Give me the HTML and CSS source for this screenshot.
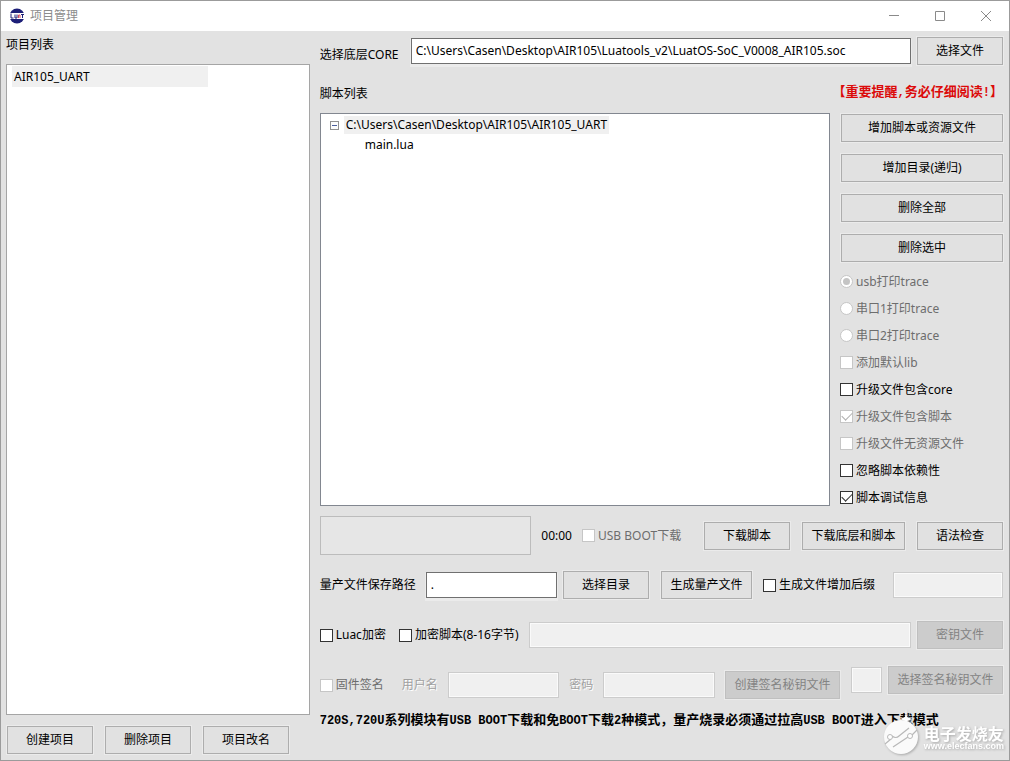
FILE: index.html
```html
<!DOCTYPE html>
<html lang="zh-CN">
<head>
<meta charset="utf-8">
<title>项目管理</title>
<link rel="stylesheet" href="styles.css">
</head>
<body>
<div class="window">
  <header class="titlebar">
    <svg class="app-icon" width="16" height="16" viewBox="0 0 16 16" aria-hidden="true">
      <circle cx="8" cy="8" r="7.5" fill="#1d1f78"/>
      <rect x="0" y="5" width="16" height="6" fill="#fff"/>
      <path d="M2 5.500v4.500h2.500M6 6.500v3.500h2v-3.500" fill="none" stroke="#1d1f78" stroke-width="1"/>
      <path d="M9.500 10v-3h1.500v3" fill="none" stroke="#d04a60" stroke-width="1"/>
      <path d="M12 6.500h3M13.500 6v4" fill="none" stroke="#1d1f78" stroke-width="1"/>
    </svg>
    <h1 class="title">项目管理</h1>
    <button class="win-btn" type="button" aria-label="最小化"><svg width="12" height="12" viewBox="0 0 12 12"><path d="M1 5.500h10"/></svg></button>
    <button class="win-btn" type="button" aria-label="最大化"><svg width="12" height="12" viewBox="0 0 12 12"><path d="M1.500 1.500h9v9h-9z"/></svg></button>
    <button class="win-btn" type="button" aria-label="关闭"><svg width="12" height="12" viewBox="0 0 12 12"><path d="M1 1l10 10M11 1l-10 10"/></svg></button>
  </header>

  <main class="content">
    <section class="projects">
      <h2 class="label">项目列表</h2>
      <ul class="project-list"><li class="project">AIR105_UART</li></ul>
      <div class="project-actions">
        <button class="btn" type="button">创建项目</button>
        <button class="btn" type="button">删除项目</button>
        <button class="btn" type="button">项目改名</button>
      </div>
    </section>

    <section class="details">
      <div class="row core-row">
        <label class="label core-label" for="core">选择底层CORE</label>
        <input class="field grow" id="core" type="text" value="C:\Users\Casen\Desktop\AIR105\Luatools_v2\LuatOS-SoC_V0008_AIR105.soc">
        <button class="btn" type="button">选择文件</button>
      </div>
      <div class="row heading-row">
        <h2 class="label">脚本列表</h2>
        <strong class="notice warning">【重要提醒<span class="half">,</span>务必仔细阅读<span class="half">!</span>】</strong>
      </div>
      <div class="scripts">
        <ul class="tree">
          <li class="node">
            <svg class="toggle" width="9" height="9" viewBox="0 0 9 9" aria-hidden="true"><rect x=".5" y=".5" width="8" height="8" fill="#fcfcfc" stroke="#919191"/><path d="M2 4.500h5" stroke="#4b5f9e"/></svg>
            <span class="root-name">C:\Users\Casen\Desktop\AIR105\AIR105_UART</span>
          </li>
          <li class="node leaf">main.lua</li>
        </ul>
        <aside class="sidebar">
          <button class="btn" type="button">增加脚本或资源文件</button>
          <button class="btn" type="button">增加目录(递归)</button>
          <button class="btn" type="button">删除全部</button>
          <button class="btn" type="button">删除选中</button>
          <div class="options">
            <label class="option off"><input class="radio" type="radio" name="trace" checked disabled>usb打印trace</label>
            <label class="option off"><input class="radio" type="radio" name="trace" disabled>串口1打印trace</label>
            <label class="option off"><input class="radio" type="radio" name="trace" disabled>串口2打印trace</label>
            <label class="option off"><input class="check" type="checkbox" disabled>添加默认lib</label>
            <label class="option"><input class="check" type="checkbox">升级文件包含core</label>
            <label class="option off"><input class="check" type="checkbox" checked disabled>升级文件包含脚本</label>
            <label class="option off"><input class="check" type="checkbox" disabled>升级文件无资源文件</label>
            <label class="option"><input class="check" type="checkbox">忽略脚本依赖性</label>
            <label class="option"><input class="check" type="checkbox" checked>脚本调试信息</label>
          </div>
        </aside>
      </div>
      <div class="row download-row">
        <div class="progress" role="progressbar" aria-label="下载进度" aria-valuenow="0"></div>
        <span class="timer">00:00</span>
        <label class="option off usb-boot"><input class="check" type="checkbox" disabled>USB BOOT下载</label>
        <div class="download-actions">
          <button class="btn" type="button">下载脚本</button>
          <button class="btn wide" type="button">下载底层和脚本</button>
          <button class="btn" type="button">语法检查</button>
        </div>
      </div>
      <div class="row">
        <label class="label path-label" for="path">量产文件保存路径</label>
        <input class="field path" id="path" type="text" value=".">
        <button class="btn" type="button">选择目录</button>
        <button class="btn generate" type="button">生成量产文件</button>
        <label class="option suffix-option"><input class="check" type="checkbox">生成文件增加后缀</label>
        <input class="field suffix" type="text" aria-label="后缀" disabled>
      </div>
      <div class="row">
        <label class="option luac"><input class="check" type="checkbox">Luac加密</label>
        <label class="option encrypt"><input class="check" type="checkbox">加密脚本(8-16字节)</label>
        <input class="field grow" type="text" aria-label="加密脚本密钥" disabled>
        <button class="btn" type="button" disabled>密钥文件</button>
      </div>
      <div class="row sign-row">
        <label class="option off"><input class="check" type="checkbox" disabled>固件签名</label>
        <label class="label etched user-label" for="user">用户名</label>
        <input class="field credential" id="user" type="text" disabled>
        <label class="label etched" for="password">密码</label>
        <input class="field credential" id="password" type="password" disabled>
        <button class="btn key" type="button" disabled>创建签名秘钥文件</button>
        <div class="key-picker">
          <input class="field grow" type="text" aria-label="签名秘钥文件" disabled>
          <button class="btn key" type="button" disabled>选择签名秘钥文件</button>
        </div>
      </div>
      <p class="notice"><span class="half">720S,720U</span>系列模块有<span class="half">USB BOOT</span>下载和免<span class="half">BOOT</span>下载<span class="half">2</span>种模式，量产烧录必须通过拉高<span class="half">USB BOOT</span>进入下载模式</p>
    </section>
  </main>

  <div class="watermark">
    <svg class="mark" width="38" height="48" viewBox="0 0 38 48" aria-hidden="true">
      <path d="M24 1l1 8 5 2-5 2-1 6-1-6-5-2 5-2z" fill="#fff"/>
      <circle cx="19" cy="29" r="17" fill="#fafafa"/>
      <path d="M3 36l6-5M10 28q4 3 7 0l10-8M11 39l15-10M30 27l5-5" fill="none" stroke="#b8b8b8" stroke-width="1.200"/>
      <circle cx="8" cy="29" r="2.500" fill="#fff" stroke="#b8b8b8"/>
      <circle cx="28" cy="28" r="2.500" fill="#fff" stroke="#b8b8b8"/>
    </svg>
    <div class="brand"><span class="brand-name">电子发烧友</span><span class="brand-url">www.elecfans.com</span></div>
  </div>
</div>
</body>
</html>
```
FILE: styles.css
```css
* { box-sizing: border-box; }

body {
  margin: 0;
  font: 12px/18px "Noto Sans", "Noto Sans CJK SC", sans-serif;
  color: #000;
}

button, input { font: inherit; color: inherit; }

.window {
  position: relative;
  display: flex;
  flex-direction: column;
  min-height: 100vh;
  border: 1px solid #9b9b9b;
  background: #e2e2e2;
}

.titlebar {
  display: flex;
  align-items: center;
  height: 30px;
  padding-left: 8px;
  background: #fff;
}

.title {
  flex: 1;
  margin: 0 0 0 5px;
  font-size: 12px;
  font-weight: normal;
  color: #8c8c8c;
}

.win-btn {
  display: flex;
  align-items: center;
  justify-content: center;
  width: 46px;
  height: 30px;
  padding: 0;
  border: 0;
  background: none;
}

.win-btn path { fill: none; stroke: #8a8a8a; }

.content {
  flex: 1;
  display: flex;
  gap: 10px;
  padding: 6px 6px 6px 5px;
}

.projects {
  flex: 4;
  display: flex;
  flex-direction: column;
}

.details {
  flex: 9;
  display: flex;
  flex-direction: column;
  min-width: 0;
}

.label {
  margin: 0;
  font-size: 12px;
  font-weight: normal;
  white-space: nowrap;
}

.projects .label { margin: -1px 0 10px; }

.project-list {
  flex: 1;
  margin: 0 0 11px;
  padding: 1px 5px;
  border: 1px solid #a5a5a5;
  background: #fff;
  list-style: none;
}

.project {
  width: 196px;
  padding: 2px 2px 1px;
  background: #f0f0f0;
}

.project-actions {
  display: flex;
  gap: 12px;
  padding-left: 1px;
}

.btn {
  flex: none;
  width: 86px;
  height: 28px;
  padding: 0;
  border: 1px solid #adadad;
  background: #e1e1e1;
  box-shadow: 0 0 0 1px #ebebeb;
  white-space: nowrap;
}

.btn:disabled {
  border-color: #bfbfbf;
  background: #cccccc;
  color: #838383;
}

.field {
  height: 26px;
  min-width: 0;
  padding: 0 4px 2px;
  border: 1px solid #707070;
  border-radius: 0;
  background: #fff;
  box-shadow: 0 2px 0 1px #ebebeb;
}

.field:disabled {
  border-color: #cccccc;
  background: #f0f0f0;
  box-shadow: inset 0 0 0 1px #fafafa;
}

.grow { flex: 1; }

.row {
  display: flex;
  align-items: center;
  gap: 6px;
  min-height: 28px;
  margin-bottom: 22px;
}

.core-row { margin-bottom: 16px; }

.core-label {
  width: 85px;
  padding-top: 8px;
}

.heading-row {
  justify-content: space-between;
  min-height: 24px;
  margin-bottom: 8px;
}

.heading-row .label { padding-top: 2px; }

.notice {
  margin: 0;
  font-size: 13px;
  font-weight: bold;
  white-space: nowrap;
}

.warning {
  padding-bottom: 2px;
  color: #dc0a0a;
}

.half {
  font-family: "Liberation Mono", monospace;
  font-size: 12px;
}

.scripts {
  display: flex;
  gap: 11px;
  margin-bottom: 5px;
}

.tree {
  flex: 1;
  margin: 0 0 5px;
  padding: 1px 9px;
  border: 1px solid #828790;
  background: #fff;
  list-style: none;
}

.node {
  display: flex;
  align-items: center;
  gap: 5px;
  height: 20px;
}

.root-name {
  padding: 0 2px;
  background: #f0f0f0;
}

.leaf { padding-left: 35px; }

.sidebar {
  display: flex;
  flex-direction: column;
  gap: 12px;
  width: 162px;
  padding-top: 1px;
}

.sidebar .btn { width: auto; }

.options {
  display: grid;
  grid-auto-rows: 27px;
  margin: -6px 0 0 -1px;
}

.option {
  display: flex;
  align-items: center;
  gap: 3px;
  white-space: nowrap;
}

.off { color: #6d6d6d; }

.check, .radio {
  appearance: none;
  display: grid;
  place-items: center;
  flex: none;
  width: 13px;
  height: 13px;
  margin: 0;
  border: 1px solid #333;
  background: #fff;
}

.radio { border-radius: 50%; }

.check:disabled, .radio:disabled { border-color: #c6c6c6; }

.check:checked::before {
  content: "";
  width: 9px;
  height: 5px;
  margin-top: -3px;
  border: solid #333;
  border-width: 0 0 1px 1px;
  transform: rotate(-45deg);
}

.check:checked:disabled::before { border-color: #b0b0b0; }

.radio:checked::before {
  content: "";
  width: 7px;
  height: 7px;
  border-radius: 50%;
  background: #c4c4c4;
}

.download-row {
  gap: 10px;
  margin-bottom: 16px;
}

.progress {
  flex: 1;
  height: 39px;
  border: 1px solid #bcbcbc;
  background: #e6e6e6;
}

.usb-boot { width: 104px; }

.download-actions {
  display: flex;
  gap: 12px;
  margin-left: 8px;
}

.wide { width: 103px; }

.path-label { width: 100px; }

.path { flex: 1; }

.generate {
  width: 91px;
  margin-left: 6px;
}

.suffix-option { margin-left: 5px; }

.suffix {
  width: 110px;
  margin-left: 12px;
}

.luac { margin-right: 7px; }

.encrypt { margin-right: 4px; }

.sign-row {
  gap: 10px;
  margin-bottom: 11px;
}

.user-label { margin-left: 8px; }

.etched {
  color: #a0a0a0;
  text-shadow: 1px 1px 0 #fff;
}

.credential {
  flex: 1;
  width: 0;
}

.key { width: 115px; }

.key-picker {
  display: flex;
  align-items: center;
  gap: 6px;
  width: 152px;
  padding-bottom: 10px;
  margin: -5px 0 -5px 1px;
}

.watermark {
  position: absolute;
  right: 5px;
  bottom: 4px;
  display: flex;
  align-items: center;
  gap: 4px;
  color: #fff;
}

.mark, .brand { filter: drop-shadow(1px 1px 1px #aaa); }

.brand {
  display: flex;
  flex-direction: column;
  padding-top: 14px;
}

.brand-name {
  font-size: 16px;
  font-weight: bold;
  line-height: 15px;
}

.brand-url {
  font-family: "Liberation Sans", sans-serif;
  font-size: 9px;
  font-weight: bold;
  line-height: 9px;
}
```
